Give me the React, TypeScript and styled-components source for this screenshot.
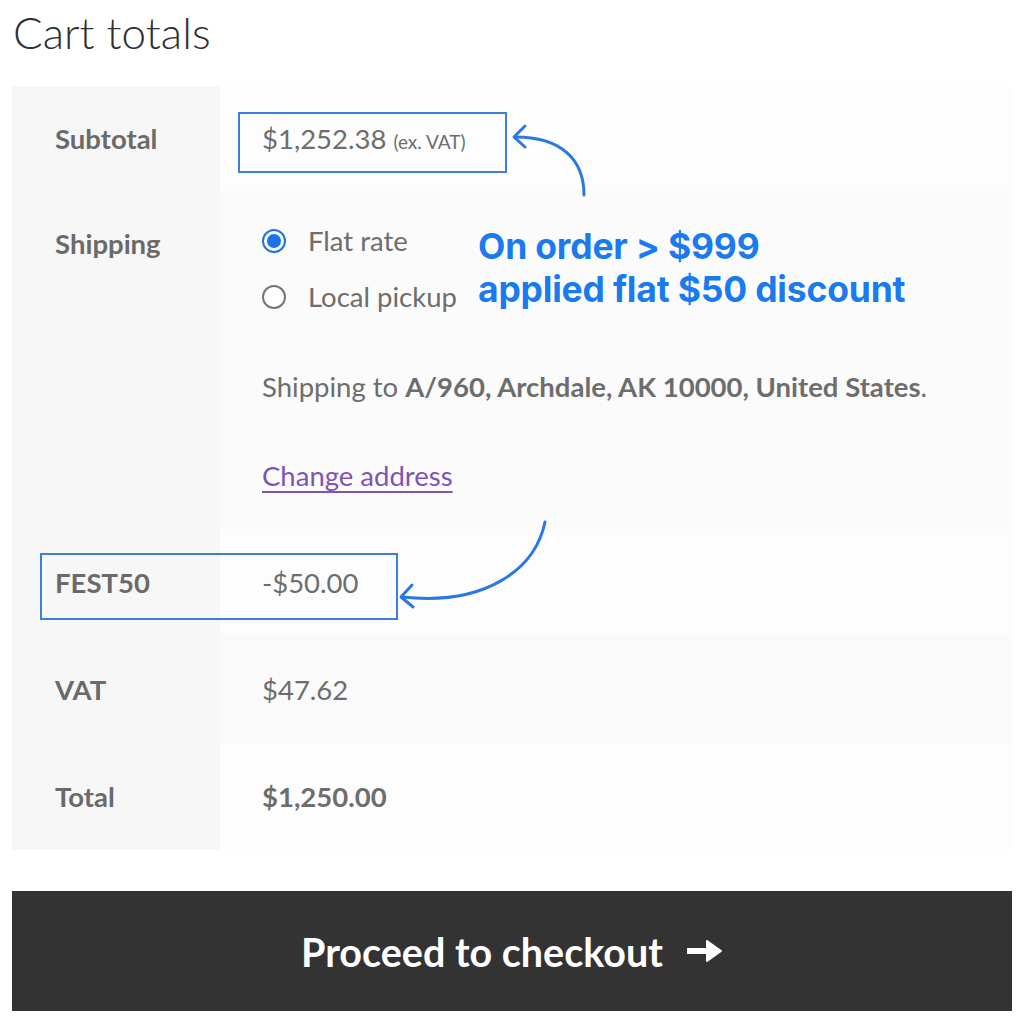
import React from "react";
import styled, { createGlobalStyle } from "styled-components";

const Global = createGlobalStyle`
  html, body { margin: 0; padding: 0; background: #ffffff; }
  body { font-family: "Lato", "Liberation Sans", sans-serif; }
`;

const Page = styled.div`
  position: relative;
  width: 1024px;
  height: 1024px;
  padding: 0 12px;
  box-sizing: border-box;
  overflow: hidden;
`;

const Title = styled.h2`
  margin: 0;
  height: 86px;
  padding-top: 2px;
  box-sizing: border-box;
  font-family: "Lato", sans-serif;
  font-weight: 300;
  font-size: 44px;
  line-height: 60px;
  color: #2f2f2f;
  padding-left: 1px;
`;

const Table = styled.div`
  display: flex;
  flex-direction: column;
  width: 1000px;
`;

const Row = styled.div<{ $h: number; $bg: string; $top?: boolean }>`
  display: grid;
  grid-template-columns: 208px 1fr;
  height: ${(p) => p.$h}px;
  background: ${(p) => p.$bg};
  align-items: ${(p) => (p.$top ? "start" : "center")};
`;

const Label = styled.div<{ $pt?: number }>`
  align-self: stretch;
  display: flex;
  align-items: ${(p) => (p.$pt ? "flex-start" : "center")};
  padding: ${(p) => (p.$pt ? `${p.$pt}px` : "0")} 0 0 43px;
  background: #f7f7f7;
  font-size: 27.5px;
  font-weight: 700;
  color: #6a6a6a;
  box-sizing: border-box;
`;

const Value = styled.div<{ $bold?: boolean }>`
  padding-left: 42px;
  font-size: 27.5px;
  font-weight: ${(p) => (p.$bold ? 700 : 400)};
  color: #6d6d6d;
`;

const Small = styled.small`
  font-size: 19px;
`;

const ShipCell = styled.div`
  padding: 33px 0 0 42px;
  display: flex;
  flex-direction: column;
  font-size: 27.5px;
  color: #6d6d6d;
`;

const RadioRow = styled.label`
  display: flex;
  align-items: center;
  gap: 22px;
  height: 35px;
  margin-bottom: 21px;
`;

const Radio = styled.span<{ $on?: boolean }>`
  width: 24px;
  height: 24px;
  border-radius: 50%;
  box-sizing: border-box;
  border: 2px solid ${(p) => (p.$on ? "#1a73e8" : "#767676")};
  display: flex;
  align-items: center;
  justify-content: center;
  background: #fff;
  &::after {
    content: "";
    width: 14px;
    height: 14px;
    border-radius: 50%;
    background: ${(p) => (p.$on ? "#1a73e8" : "transparent")};
  }
`;

const ShipTo = styled.p`
  margin: 33px 0 0;
  line-height: 38px;
  strong { font-weight: 700; }
`;

const Link = styled.a`
  margin-top: 51px;
  color: #7f54b3;
  text-decoration: underline;
  text-underline-offset: 5px;
  text-decoration-thickness: 2px;
  line-height: 38px;
  align-self: flex-start;
`;

const Button = styled.button`
  margin-top: 41px;
  width: 1000px;
  height: 120px;
  border: none;
  background: #333333;
  color: #ffffff;
  font-family: "Lato", sans-serif;
  font-weight: 700;
  font-size: 39.5px;
  display: flex;
  align-items: center;
  justify-content: center;
  gap: 24px;
  padding: 0;
`;

const Overlay = styled.svg`
  position: absolute;
  left: 0;
  top: 0;
  width: 1024px;
  height: 1024px;
  pointer-events: none;
`;

const Box = styled.div<{ $x: number; $y: number; $w: number; $h: number }>`
  position: absolute;
  left: ${(p) => p.$x}px;
  top: ${(p) => p.$y}px;
  width: ${(p) => p.$w}px;
  height: ${(p) => p.$h}px;
  border: 2px solid #3a7fdc;
  box-sizing: border-box;
  pointer-events: none;
`;

const Note = styled.div`
  position: absolute;
  left: 478px;
  top: 225px;
  font-family: "Inter", sans-serif;
  font-weight: 700;
  font-size: 35.5px;
  line-height: 43px;
  color: #1a7af0;
  letter-spacing: -0.2px;
  text-shadow: 0 0 6px #ffffff, 0 0 3px #ffffff;
  pointer-events: none;
`;

const ArrowIcon = () => (
  <svg width="36" height="24" viewBox="0 0 36 24">
    <rect x="0" y="9" width="22" height="6" fill="#fff" />
    <path d="M20 2 L34 12 L20 22 Z" fill="#fff" strokeLinejoin="round" stroke="#fff" strokeWidth="2" />
  </svg>
);

export default function App() {
  return (
    <>
      <Global />
      <Page>
        <Title>Cart totals</Title>
        <Table>
          <Row $h={104} $bg="#fdfdfd">
            <Label>Subtotal</Label>
            <Value>
              $1,252.38 <Small>(ex. VAT)</Small>
            </Value>
          </Row>
          <Row $h={340} $bg="#fbfbfb" $top>
            <Label $pt={37}>Shipping</Label>
            <ShipCell>
              <RadioRow>
                <Radio $on />
                Flat rate
              </RadioRow>
              <RadioRow>
                <Radio />
                Local pickup
              </RadioRow>
              <ShipTo>
                Shipping to <strong>A/960, Archdale, AK 10000, United States</strong>.
              </ShipTo>
              <Link href="#">Change address</Link>
            </ShipCell>
          </Row>
          <Row $h={105} $bg="#fdfdfd">
            <Label>FEST50</Label>
            <Value>-$50.00</Value>
          </Row>
          <Row $h={108} $bg="#fafafa">
            <Label>VAT</Label>
            <Value>$47.62</Value>
          </Row>
          <Row $h={107} $bg="#fdfdfd">
            <Label>Total</Label>
            <Value $bold>$1,250.00</Value>
          </Row>
        </Table>
        <Button>
          Proceed to checkout
          <ArrowIcon />
        </Button>

        <Box $x={238} $y={112} $w={269} $h={61} />
        <Box $x={40} $y={553} $w={358} $h={67} />
        <Note>
          On order &gt; $999
          <br />
          applied flat $50 discount
        </Note>
        <Overlay viewBox="0 0 1024 1024">
          <g fill="none" stroke="#2a78e4" strokeWidth="3" strokeLinecap="round" strokeLinejoin="round">
            <path d="M584 195 C584 160 562 137 515 137" />
            <path d="M525 126 L514 137 L525 147" />
            <path d="M545 522 C535 570 485 606 402 597" />
            <path d="M412 585 L401 597 L413 607" />
          </g>
        </Overlay>
      </Page>
    </>
  );
}
